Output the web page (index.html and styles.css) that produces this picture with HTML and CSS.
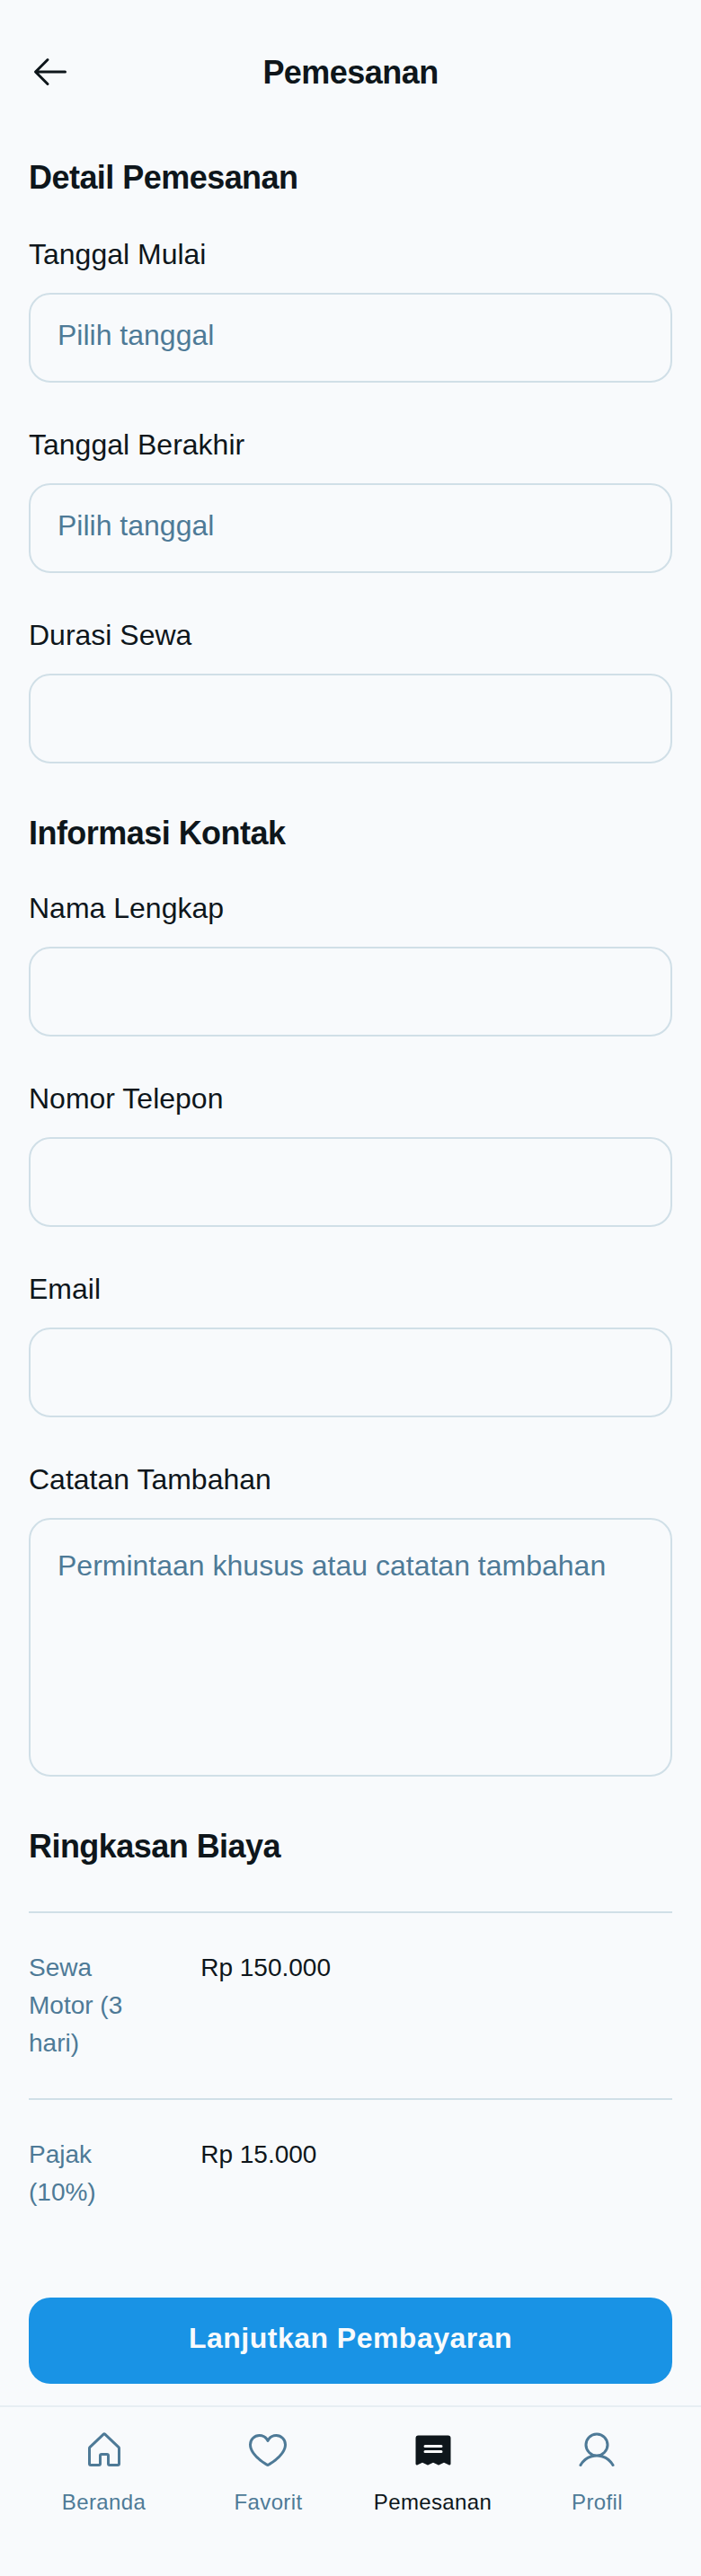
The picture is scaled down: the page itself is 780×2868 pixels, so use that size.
FILE: index.html
```html
<!DOCTYPE html>
<html lang="id">
<head>
<meta charset="utf-8">
<title>Pemesanan</title>
<link rel="stylesheet" href="styles.css">
</head>
<body>
<div class="page">
  <header class="header">
    <a class="back" aria-label="Kembali"><svg class="icon" viewBox="0 0 256 256"><path d="M224,128a8,8,0,0,1-8,8H59.31l58.35,58.34a8,8,0,0,1-11.32,11.32l-72-72a8,8,0,0,1,0-11.32l72-72a8,8,0,0,1,11.32,11.32L59.31,120H216A8,8,0,0,1,224,128Z"/></svg></a>
    <h1 class="title">Pemesanan</h1>
  </header>
  <main class="content">
    <h2 class="section section-first">Detail Pemesanan</h2>
    <label class="field"><span class="label">Tanggal Mulai</span><input class="input" placeholder="Pilih tanggal"></label>
    <label class="field"><span class="label">Tanggal Berakhir</span><input class="input" placeholder="Pilih tanggal"></label>
    <label class="field"><span class="label">Durasi Sewa</span><input class="input"></label>
    <h2 class="section">Informasi Kontak</h2>
    <label class="field"><span class="label">Nama Lengkap</span><input class="input"></label>
    <label class="field"><span class="label">Nomor Telepon</span><input class="input"></label>
    <label class="field"><span class="label">Email</span><input class="input"></label>
    <label class="field"><span class="label">Catatan Tambahan</span><textarea class="input textarea" placeholder="Permintaan khusus atau catatan tambahan"></textarea></label>
    <h2 class="section section-last">Ringkasan Biaya</h2>
    <dl class="costs">
      <div class="cost"><dt class="cost-name">Sewa Motor (3 hari)</dt><dd class="cost-value">Rp 150.000</dd></div>
      <div class="cost"><dt class="cost-name">Pajak (10%)</dt><dd class="cost-value">Rp 15.000</dd></div>
    </dl>
  </main>
  <footer>
    <div class="action"><button class="submit">Lanjutkan Pembayaran</button></div>
    <nav class="nav">
      <a class="tab"><span class="tab-icon"><svg class="icon" viewBox="0 0 256 256"><path d="M218.83,103.77l-80-75.48a1.14,1.14,0,0,1-.11-.11,16,16,0,0,0-21.53,0l-.11.11L37.17,103.77A16,16,0,0,0,32,115.55V208a16,16,0,0,0,16,16H96a16,16,0,0,0,16-16V160h32v48a16,16,0,0,0,16,16h48a16,16,0,0,0,16-16V115.55A16,16,0,0,0,218.83,103.77ZM208,208H160V160a16,16,0,0,0-16-16H112a16,16,0,0,0-16,16v48H48V115.55l.11-.1L128,40l79.9,75.43.11.1Z"/></svg></span><span class="tab-label">Beranda</span></a>
      <a class="tab"><span class="tab-icon"><svg class="icon" viewBox="0 0 256 256"><path d="M178,32c-20.65,0-38.73,8.88-50,23.89C116.73,40.88,98.65,32,78,32A62.07,62.07,0,0,0,16,94c0,70,103.79,126.66,108.21,129a8,8,0,0,0,7.58,0C136.21,220.66,240,164,240,94A62.07,62.07,0,0,0,178,32ZM128,206.8C109.74,196.16,32,147.69,32,94A46.06,46.06,0,0,1,78,48c19.45,0,35.8,10.36,42.6,27a8,8,0,0,0,14.8,0c6.8-16.67,23.15-27,42.6-27a46.06,46.06,0,0,1,46,46C224,147.61,146.24,196.15,128,206.8Z"/></svg></span><span class="tab-label">Favorit</span></a>
      <a class="tab tab-active"><span class="tab-icon"><svg class="icon" viewBox="0 0 256 256"><path d="M216,40H40A16,16,0,0,0,24,56V208a8,8,0,0,0,11.58,7.15L64,200.94l28.42,14.21a8,8,0,0,0,7.16,0L128,200.94l28.42,14.21a8,8,0,0,0,7.16,0L192,200.94l28.42,14.21A8,8,0,0,0,232,208V56A16,16,0,0,0,216,40ZM176,144H80a8,8,0,0,1,0-16h96a8,8,0,0,1,0,16Zm0-32H80a8,8,0,0,1,0-16h96a8,8,0,0,1,0,16Z"/></svg></span><span class="tab-label">Pemesanan</span></a>
      <a class="tab"><span class="tab-icon"><svg class="icon" viewBox="0 0 256 256"><path d="M230.92,212c-15.23-26.33-38.7-45.21-66.09-54.16a72,72,0,1,0-73.66,0C63.78,166.78,40.31,185.66,25.08,212a8,8,0,1,0,13.85,8c18.84-32.56,52.14-52,89.07-52s70.23,19.44,89.07,52a8,8,0,1,0,13.85-8ZM72,96a56,56,0,1,1,56,56A56.06,56.06,0,0,1,72,96Z"/></svg></span><span class="tab-label">Profil</span></a>
    </nav>
  </footer>
</div>
</body>
</html>
```
FILE: styles.css
```css
* { box-sizing: border-box; margin: 0; padding: 0; }
body {
  background: #f8fafc;
  color: #0e161b;
  font-family: "Liberation Sans", Arial, sans-serif;
}
.page { display: flex; flex-direction: column; justify-content: space-between; min-height: 2868px; }
.icon { display: block; width: 48px; height: 48px; fill: currentColor; }

.header { display: flex; align-items: center; padding: 32px 32px 16px; }
.back { display: flex; align-items: center; width: 96px; height: 96px; }
.title {
  flex: 1;
  padding-right: 96px;
  text-align: center;
  font-size: 36px;
  line-height: 45px;
  letter-spacing: -0.015em;
}

.section {
  padding: 32px 32px 16px;
  font-size: 36px;
  line-height: 44px;
  letter-spacing: -0.015em;
}
.section-first { padding-bottom: 18px; }
.section-last { padding-bottom: 18px; }

.field { display: flex; flex-direction: column; padding: 24px 32px; }
.label { padding-bottom: 22px; font-size: 32px; line-height: 42px; }
.input {
  display: block;
  width: 100%;
  height: 100px;
  padding: 26px 30px 32px;
  border: 2px solid #d0dfe7;
  border-radius: 24px;
  background: #f8fafc;
  color: #0e161b;
  font-family: inherit;
  font-size: 32px;
  line-height: 40px;
  outline: none;
}
.input::placeholder { color: #4e7a97; opacity: 1; }
.textarea { height: 288px; padding-top: 30px; line-height: 42px; resize: none; }

.costs { padding: 32px; }
.cost {
  display: grid;
  grid-template-columns: 20% 1fr;
  column-gap: 48px;
  padding: 40px 0;
  border-top: 2px solid #d0dfe7;
  font-size: 28px;
  line-height: 42px;
}
.cost-name { color: #4e7a97; }

.action { padding: 24px 32px; }
.submit {
  display: block;
  width: 100%;
  height: 96px;
  padding: 0 40px 6px;
  border: 0;
  border-radius: 24px;
  background: #1993e5;
  color: #f8fafc;
  font-family: inherit;
  font-size: 32px;
  font-weight: 700;
  letter-spacing: 0.015em;
}
.nav {
  display: flex;
  gap: 16px;
  padding: 16px 32px 64px;
  border-top: 2px solid #e7eef3;
}
.tab {
  flex: 1 1 0;
  display: flex;
  flex-direction: column;
  align-items: center;
  gap: 8px;
  color: #4e7a97;
}
.tab-active { color: #0e161b; }
.tab-icon { display: flex; align-items: center; height: 64px; }
.tab:nth-child(even) .tab-icon { padding-right: 1px; }
.tab-label { font-size: 24px; line-height: 36px; letter-spacing: 0.015em; }
```
